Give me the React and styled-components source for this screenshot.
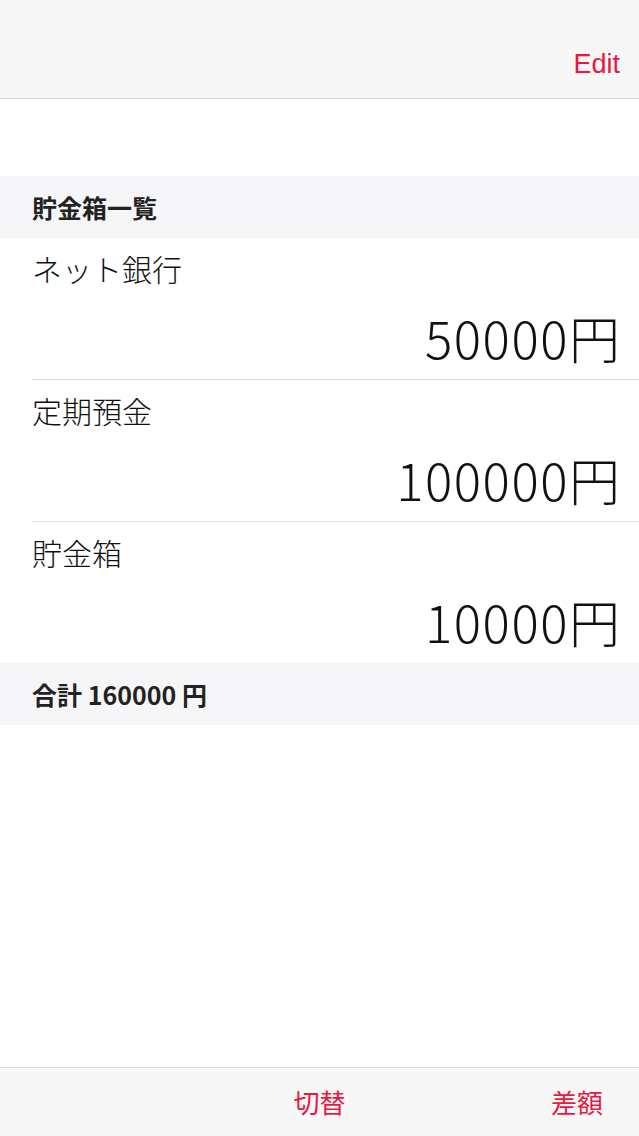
import React from "react";
import styled, { createGlobalStyle } from "styled-components";

const GlobalStyle = createGlobalStyle`
  html, body {
    margin: 0;
    padding: 0;
    background: #fff;
    font-family: "Noto Sans CJK JP", "Noto Sans", sans-serif;
  }
`;

const accounts = [
  { name: "ネット銀行", amount: 50000 },
  { name: "定期預金", amount: 100000 },
  { name: "貯金箱", amount: 10000 },
];

const App = () => {
  const total = accounts.reduce((sum, a) => sum + a.amount, 0);

  return (
    <Screen>
      <GlobalStyle />
      <NavBar>
        <NavButton>Edit</NavButton>
      </NavBar>

      <Content>
        <SectionHeader>貯金箱一覧</SectionHeader>
        {accounts.map((a, i) => (
          <Row key={a.name}>
            <RowInner last={i === accounts.length - 1}>
              <Name>{a.name}</Name>
              <Amount>{a.amount}円</Amount>
            </RowInner>
          </Row>
        ))}
        <SectionHeader>合計 {total} 円</SectionHeader>
      </Content>

      <Toolbar>
        <span />
        <ToolButton>切替</ToolButton>
        <ToolRight>
          <ToolButton>差額</ToolButton>
        </ToolRight>
      </Toolbar>
    </Screen>
  );
};

export default App;

const Screen = styled.div`
  display: flex;
  flex-direction: column;
  min-height: 100vh;
`;

const NavBar = styled.div`
  height: 99px;
  box-sizing: border-box;
  background-color: #f7f7f8;
  border-bottom: 1px solid #d6d6d9;
  display: flex;
  justify-content: flex-end;
  align-items: flex-start;
  padding: 31px 19px 0 0;
`;

const NavButton = styled.div`
  color: #e8193f;
  font-family: "Liberation Sans", "Noto Sans CJK JP", sans-serif;
  font-size: 27px;
  line-height: 66px;
  cursor: pointer;
`;

const Content = styled.div`
  flex: 1;
  padding-top: 77px;
  background-color: #fff;
`;

const SectionHeader = styled.div`
  height: 62px;
  display: flex;
  align-items: center;
  padding-left: 32px;
  background-color: #f6f6f8;
  color: #222;
  font-size: 25px;
  font-weight: 700;
`;

const Row = styled.div`
  padding-left: 32px;
  background-color: #fff;
`;

const RowInner = styled.div`
  display: flex;
  flex-direction: column;
  padding: 10px 19px 12px 0;
  border-bottom: ${(p) => (p.last ? "none" : "1px solid #e0e0e2")};
`;

const Name = styled.div`
  font-size: 30px;
  font-weight: 300;
  line-height: 40px;
  color: #111;
`;

const Amount = styled.div`
  margin-top: 19px;
  font-size: 51px;
  font-weight: 300;
  letter-spacing: 1.5px;
  margin-right: -1.5px;
  line-height: 60px;
  text-align: right;
  color: #111;
`;

const Toolbar = styled.div`
  height: 69px;
  box-sizing: border-box;
  border-top: 1px solid #d6d6d9;
  background-color: #f7f7f8;
  display: grid;
  grid-template-columns: 1fr auto 1fr;
  align-items: center;
`;

const ToolButton = styled.div`
  color: #e8193f;
  font-size: 26px;
  line-height: 40px;
  cursor: pointer;
`;

const ToolRight = styled.div`
  display: flex;
  justify-content: flex-end;
  padding-right: 36px;
`;
